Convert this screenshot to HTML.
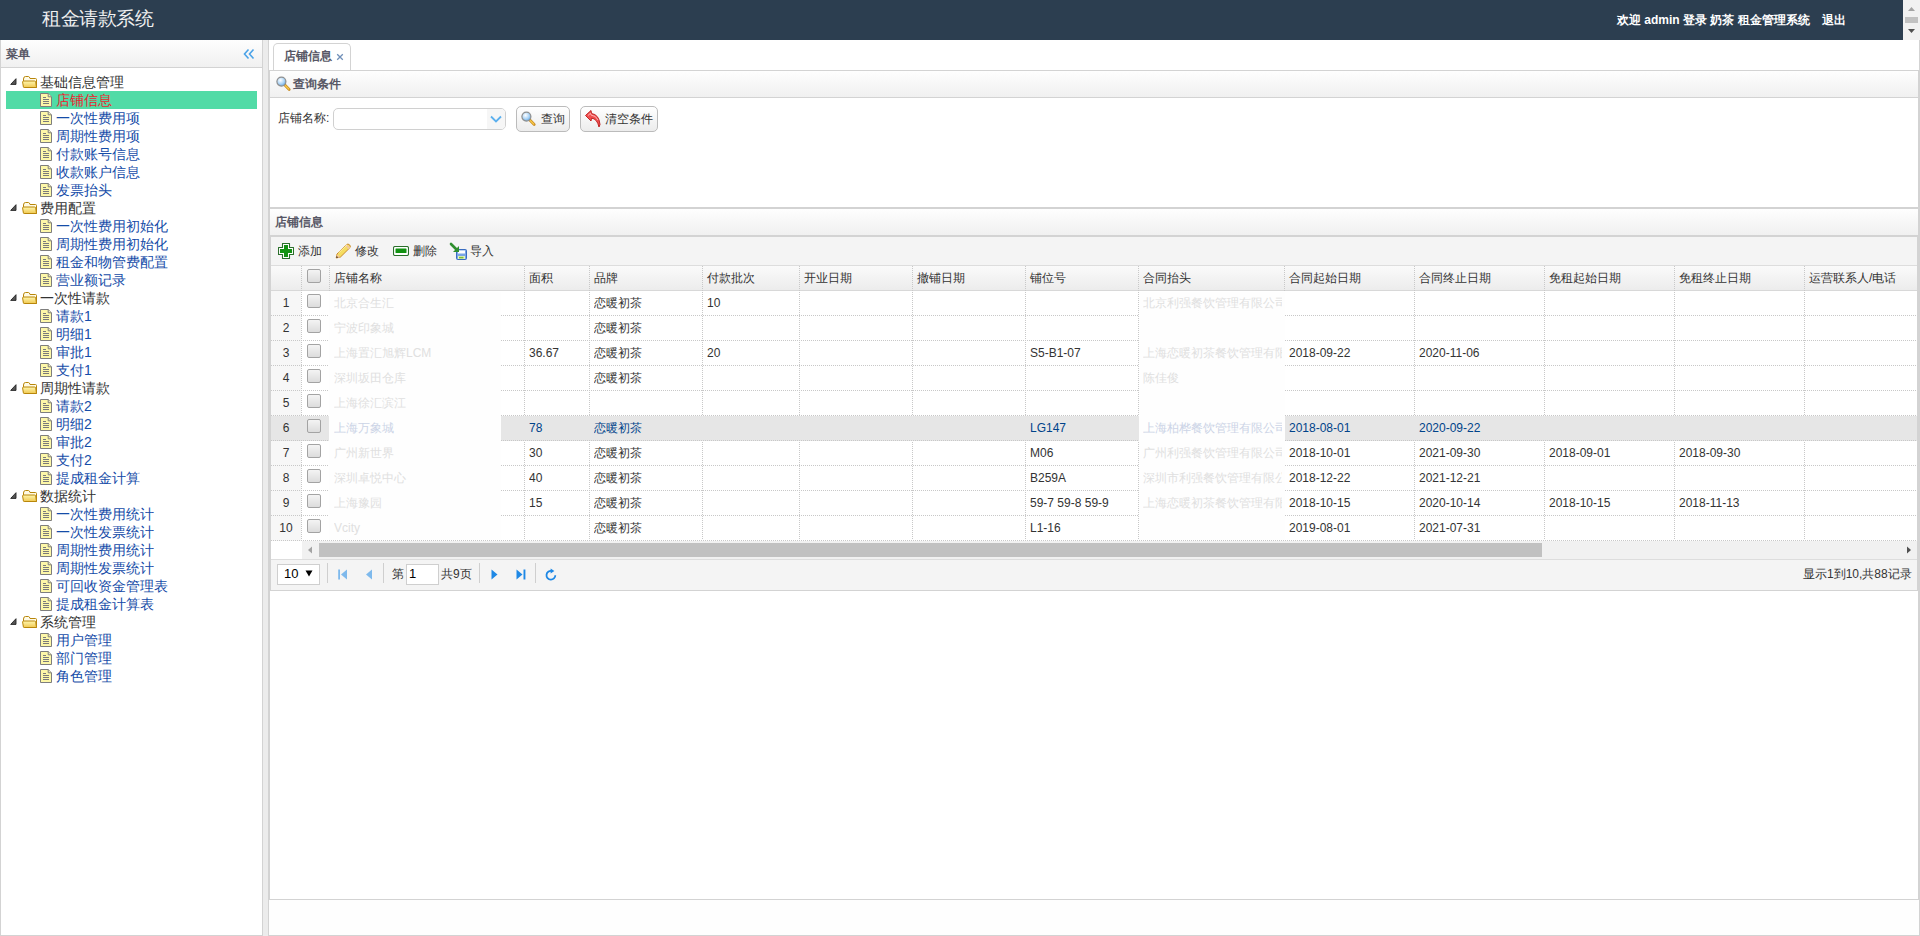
<!DOCTYPE html>
<html><head><meta charset="utf-8"><title>租金请款系统</title>
<style>
*{box-sizing:border-box}
html,body{margin:0;padding:0;width:1920px;height:936px;overflow:hidden;background:#fff;font-family:"Liberation Sans",sans-serif;font-size:12px;color:#333}
.a{position:absolute}
svg{display:block}
.nw{white-space:nowrap}
#hdr{left:0;top:0;width:1903px;height:40px;background:#2c3e50}
#hdr .title{left:42px;top:7px;letter-spacing:-0.4px;font-size:18.5px;font-weight:300;color:#f0f0f0;line-height:24px}
#hdr .info{left:1617px;top:12px;font-weight:bold;color:#fff;line-height:16px}
#vsb{left:1903px;top:0;width:17px;height:40px;background:#f1f1f1}
#west{left:0;top:40px;width:263px;height:896px;border:1px solid #d3d3d3;border-top:0}
.ph{background:linear-gradient(#fefefe,#f0f0f0)}
.ptitle{font-weight:bold;color:#575765;line-height:16px}
#split{left:263px;top:40px;width:5px;height:896px;background:#ececec}
#center{left:268px;top:40px;width:1652px;height:860px;border-left:1px solid #d3d3d3;border-right:1px solid #d3d3d3;border-bottom:1px solid #d3d3d3}
#south{left:268px;top:900px;width:1652px;height:36px;border:1px solid #d3d3d3;border-top:0;background:#fefefe}
.tn{left:6px;width:251px;height:18px;line-height:18px;font-size:14px;white-space:nowrap}
.tn.root{color:#333}
.tn.leaf{color:#154ca8}
.tn.sel{background:#51dba6;color:#ec1e2e}
.tn span{position:absolute;top:0}
.gh{height:25px;line-height:25px;color:#333;white-space:nowrap}
.cell{height:25px;line-height:25px;white-space:nowrap;overflow:hidden}
.vd{width:1px;background-image:linear-gradient(#c8c8c8 50%,transparent 50%);background-size:1px 2px}
.hd{height:1px;background-image:linear-gradient(90deg,#c8c8c8 50%,transparent 50%);background-size:2px 1px}
.ck{width:14px;height:14px;border:1px solid #a3a3a3;border-radius:2px;background:linear-gradient(#f4f4f4,#dcdcdc)}
.btn{border:1px solid #bbb;border-radius:5px;background:linear-gradient(#ffffff,#ececec);color:#333;line-height:24px;white-space:nowrap}
.sep{width:1px;height:22px;background:#ccc;border-right:1px solid #fff}
</style></head>
<body>
<div id="hdr" class="a"><div class="a title nw">租金请款系统</div><div class="a info nw">欢迎 admin 登录 奶茶 租金管理系统</div><div class="a nw" style="left:1822px;top:12px;font-weight:bold;color:#fff;line-height:16px">退出</div></div>
<div id="vsb" class="a"><svg class="a" style="left:0;top:0" width="17" height="40"><path d="M5 11 L8.5 7 L12 11 Z" fill="#a3a3a3"/><rect x="2" y="17" width="13" height="6" fill="#c1c1c1"/><path d="M5 29 L12 29 L8.5 33 Z" fill="#505050"/></svg></div>
<div id="west" class="a"><div class="a ph" style="left:0;top:0;width:261px;height:28px;border-bottom:1px solid #d3d3d3"></div><div class="a ptitle nw" style="left:5px;top:6px">菜单</div><svg class="a" style="left:241px;top:7px" width="14" height="14"><path d="M6.5 2.5 L2.5 7 L6.5 11.5 M11.5 2.5 L7.5 7 L11.5 11.5" stroke="#4ba3e8" stroke-width="1.6" fill="none"/></svg></div>
<div class="a tn root" style="top:73px"><svg class="a" style="left:4px;top:5px" width="8" height="8"><path d="M6 0.7 L6 6.4 L0.7 6.4 Z" fill="#555" stroke="#222" stroke-width="0.9" stroke-linejoin="round"/></svg><svg class="a" style="left:16px;top:3px" width="16" height="13"><defs><linearGradient id="fg" x1="0" y1="0" x2="0" y2="1"><stop offset="0" stop-color="#fff7b0"/><stop offset="1" stop-color="#f0c850"/></linearGradient></defs><path d="M1.5 3 Q1.5 0.5 3.5 0.5 H6.5 Q7.5 0.5 8 2.5 H13.5 Q14.5 2.5 14.5 3.5 V11.5 H2.5 Q1.5 11.5 1.5 10.5 Z" fill="#fffbe6" stroke="#b8860b"/><path d="M0.6 6 Q0.6 5 1.6 5 H12.5 Q13.5 5 13.7 6 L14.5 11.5 H2.5 Q1.5 11.5 1.3 10.5 Z" fill="url(#fg)" stroke="#b8860b"/></svg><span style="left:34px">基础信息管理</span></div>
<div class="a tn leaf sel" style="top:91px"><svg class="a" style="left:34px;top:2px" width="12" height="14"><path d="M0.5 0.5 L8.2 0.5 L11.5 3.8 L11.5 13.5 L0.5 13.5 Z" fill="#fdf7a8" stroke="#7e7e7e"/><path d="M8.2 0.5 L8.2 3.8 L11.5 3.8" fill="#f3eab8" stroke="#7e7e7e"/><path d="M3 4.5 H6 M3 6.5 H9 M3 8.5 H9 M3 10.5 H9" stroke="#7a7a7a" stroke-width="1"/></svg><span style="left:50px">店铺信息</span></div>
<div class="a tn leaf" style="top:109px"><svg class="a" style="left:34px;top:2px" width="12" height="14"><path d="M0.5 0.5 L8.2 0.5 L11.5 3.8 L11.5 13.5 L0.5 13.5 Z" fill="#fdf7a8" stroke="#7e7e7e"/><path d="M8.2 0.5 L8.2 3.8 L11.5 3.8" fill="#f3eab8" stroke="#7e7e7e"/><path d="M3 4.5 H6 M3 6.5 H9 M3 8.5 H9 M3 10.5 H9" stroke="#7a7a7a" stroke-width="1"/></svg><span style="left:50px">一次性费用项</span></div>
<div class="a tn leaf" style="top:127px"><svg class="a" style="left:34px;top:2px" width="12" height="14"><path d="M0.5 0.5 L8.2 0.5 L11.5 3.8 L11.5 13.5 L0.5 13.5 Z" fill="#fdf7a8" stroke="#7e7e7e"/><path d="M8.2 0.5 L8.2 3.8 L11.5 3.8" fill="#f3eab8" stroke="#7e7e7e"/><path d="M3 4.5 H6 M3 6.5 H9 M3 8.5 H9 M3 10.5 H9" stroke="#7a7a7a" stroke-width="1"/></svg><span style="left:50px">周期性费用项</span></div>
<div class="a tn leaf" style="top:145px"><svg class="a" style="left:34px;top:2px" width="12" height="14"><path d="M0.5 0.5 L8.2 0.5 L11.5 3.8 L11.5 13.5 L0.5 13.5 Z" fill="#fdf7a8" stroke="#7e7e7e"/><path d="M8.2 0.5 L8.2 3.8 L11.5 3.8" fill="#f3eab8" stroke="#7e7e7e"/><path d="M3 4.5 H6 M3 6.5 H9 M3 8.5 H9 M3 10.5 H9" stroke="#7a7a7a" stroke-width="1"/></svg><span style="left:50px">付款账号信息</span></div>
<div class="a tn leaf" style="top:163px"><svg class="a" style="left:34px;top:2px" width="12" height="14"><path d="M0.5 0.5 L8.2 0.5 L11.5 3.8 L11.5 13.5 L0.5 13.5 Z" fill="#fdf7a8" stroke="#7e7e7e"/><path d="M8.2 0.5 L8.2 3.8 L11.5 3.8" fill="#f3eab8" stroke="#7e7e7e"/><path d="M3 4.5 H6 M3 6.5 H9 M3 8.5 H9 M3 10.5 H9" stroke="#7a7a7a" stroke-width="1"/></svg><span style="left:50px">收款账户信息</span></div>
<div class="a tn leaf" style="top:181px"><svg class="a" style="left:34px;top:2px" width="12" height="14"><path d="M0.5 0.5 L8.2 0.5 L11.5 3.8 L11.5 13.5 L0.5 13.5 Z" fill="#fdf7a8" stroke="#7e7e7e"/><path d="M8.2 0.5 L8.2 3.8 L11.5 3.8" fill="#f3eab8" stroke="#7e7e7e"/><path d="M3 4.5 H6 M3 6.5 H9 M3 8.5 H9 M3 10.5 H9" stroke="#7a7a7a" stroke-width="1"/></svg><span style="left:50px">发票抬头</span></div>
<div class="a tn root" style="top:199px"><svg class="a" style="left:4px;top:5px" width="8" height="8"><path d="M6 0.7 L6 6.4 L0.7 6.4 Z" fill="#555" stroke="#222" stroke-width="0.9" stroke-linejoin="round"/></svg><svg class="a" style="left:16px;top:3px" width="16" height="13"><defs><linearGradient id="fg" x1="0" y1="0" x2="0" y2="1"><stop offset="0" stop-color="#fff7b0"/><stop offset="1" stop-color="#f0c850"/></linearGradient></defs><path d="M1.5 3 Q1.5 0.5 3.5 0.5 H6.5 Q7.5 0.5 8 2.5 H13.5 Q14.5 2.5 14.5 3.5 V11.5 H2.5 Q1.5 11.5 1.5 10.5 Z" fill="#fffbe6" stroke="#b8860b"/><path d="M0.6 6 Q0.6 5 1.6 5 H12.5 Q13.5 5 13.7 6 L14.5 11.5 H2.5 Q1.5 11.5 1.3 10.5 Z" fill="url(#fg)" stroke="#b8860b"/></svg><span style="left:34px">费用配置</span></div>
<div class="a tn leaf" style="top:217px"><svg class="a" style="left:34px;top:2px" width="12" height="14"><path d="M0.5 0.5 L8.2 0.5 L11.5 3.8 L11.5 13.5 L0.5 13.5 Z" fill="#fdf7a8" stroke="#7e7e7e"/><path d="M8.2 0.5 L8.2 3.8 L11.5 3.8" fill="#f3eab8" stroke="#7e7e7e"/><path d="M3 4.5 H6 M3 6.5 H9 M3 8.5 H9 M3 10.5 H9" stroke="#7a7a7a" stroke-width="1"/></svg><span style="left:50px">一次性费用初始化</span></div>
<div class="a tn leaf" style="top:235px"><svg class="a" style="left:34px;top:2px" width="12" height="14"><path d="M0.5 0.5 L8.2 0.5 L11.5 3.8 L11.5 13.5 L0.5 13.5 Z" fill="#fdf7a8" stroke="#7e7e7e"/><path d="M8.2 0.5 L8.2 3.8 L11.5 3.8" fill="#f3eab8" stroke="#7e7e7e"/><path d="M3 4.5 H6 M3 6.5 H9 M3 8.5 H9 M3 10.5 H9" stroke="#7a7a7a" stroke-width="1"/></svg><span style="left:50px">周期性费用初始化</span></div>
<div class="a tn leaf" style="top:253px"><svg class="a" style="left:34px;top:2px" width="12" height="14"><path d="M0.5 0.5 L8.2 0.5 L11.5 3.8 L11.5 13.5 L0.5 13.5 Z" fill="#fdf7a8" stroke="#7e7e7e"/><path d="M8.2 0.5 L8.2 3.8 L11.5 3.8" fill="#f3eab8" stroke="#7e7e7e"/><path d="M3 4.5 H6 M3 6.5 H9 M3 8.5 H9 M3 10.5 H9" stroke="#7a7a7a" stroke-width="1"/></svg><span style="left:50px">租金和物管费配置</span></div>
<div class="a tn leaf" style="top:271px"><svg class="a" style="left:34px;top:2px" width="12" height="14"><path d="M0.5 0.5 L8.2 0.5 L11.5 3.8 L11.5 13.5 L0.5 13.5 Z" fill="#fdf7a8" stroke="#7e7e7e"/><path d="M8.2 0.5 L8.2 3.8 L11.5 3.8" fill="#f3eab8" stroke="#7e7e7e"/><path d="M3 4.5 H6 M3 6.5 H9 M3 8.5 H9 M3 10.5 H9" stroke="#7a7a7a" stroke-width="1"/></svg><span style="left:50px">营业额记录</span></div>
<div class="a tn root" style="top:289px"><svg class="a" style="left:4px;top:5px" width="8" height="8"><path d="M6 0.7 L6 6.4 L0.7 6.4 Z" fill="#555" stroke="#222" stroke-width="0.9" stroke-linejoin="round"/></svg><svg class="a" style="left:16px;top:3px" width="16" height="13"><defs><linearGradient id="fg" x1="0" y1="0" x2="0" y2="1"><stop offset="0" stop-color="#fff7b0"/><stop offset="1" stop-color="#f0c850"/></linearGradient></defs><path d="M1.5 3 Q1.5 0.5 3.5 0.5 H6.5 Q7.5 0.5 8 2.5 H13.5 Q14.5 2.5 14.5 3.5 V11.5 H2.5 Q1.5 11.5 1.5 10.5 Z" fill="#fffbe6" stroke="#b8860b"/><path d="M0.6 6 Q0.6 5 1.6 5 H12.5 Q13.5 5 13.7 6 L14.5 11.5 H2.5 Q1.5 11.5 1.3 10.5 Z" fill="url(#fg)" stroke="#b8860b"/></svg><span style="left:34px">一次性请款</span></div>
<div class="a tn leaf" style="top:307px"><svg class="a" style="left:34px;top:2px" width="12" height="14"><path d="M0.5 0.5 L8.2 0.5 L11.5 3.8 L11.5 13.5 L0.5 13.5 Z" fill="#fdf7a8" stroke="#7e7e7e"/><path d="M8.2 0.5 L8.2 3.8 L11.5 3.8" fill="#f3eab8" stroke="#7e7e7e"/><path d="M3 4.5 H6 M3 6.5 H9 M3 8.5 H9 M3 10.5 H9" stroke="#7a7a7a" stroke-width="1"/></svg><span style="left:50px">请款1</span></div>
<div class="a tn leaf" style="top:325px"><svg class="a" style="left:34px;top:2px" width="12" height="14"><path d="M0.5 0.5 L8.2 0.5 L11.5 3.8 L11.5 13.5 L0.5 13.5 Z" fill="#fdf7a8" stroke="#7e7e7e"/><path d="M8.2 0.5 L8.2 3.8 L11.5 3.8" fill="#f3eab8" stroke="#7e7e7e"/><path d="M3 4.5 H6 M3 6.5 H9 M3 8.5 H9 M3 10.5 H9" stroke="#7a7a7a" stroke-width="1"/></svg><span style="left:50px">明细1</span></div>
<div class="a tn leaf" style="top:343px"><svg class="a" style="left:34px;top:2px" width="12" height="14"><path d="M0.5 0.5 L8.2 0.5 L11.5 3.8 L11.5 13.5 L0.5 13.5 Z" fill="#fdf7a8" stroke="#7e7e7e"/><path d="M8.2 0.5 L8.2 3.8 L11.5 3.8" fill="#f3eab8" stroke="#7e7e7e"/><path d="M3 4.5 H6 M3 6.5 H9 M3 8.5 H9 M3 10.5 H9" stroke="#7a7a7a" stroke-width="1"/></svg><span style="left:50px">审批1</span></div>
<div class="a tn leaf" style="top:361px"><svg class="a" style="left:34px;top:2px" width="12" height="14"><path d="M0.5 0.5 L8.2 0.5 L11.5 3.8 L11.5 13.5 L0.5 13.5 Z" fill="#fdf7a8" stroke="#7e7e7e"/><path d="M8.2 0.5 L8.2 3.8 L11.5 3.8" fill="#f3eab8" stroke="#7e7e7e"/><path d="M3 4.5 H6 M3 6.5 H9 M3 8.5 H9 M3 10.5 H9" stroke="#7a7a7a" stroke-width="1"/></svg><span style="left:50px">支付1</span></div>
<div class="a tn root" style="top:379px"><svg class="a" style="left:4px;top:5px" width="8" height="8"><path d="M6 0.7 L6 6.4 L0.7 6.4 Z" fill="#555" stroke="#222" stroke-width="0.9" stroke-linejoin="round"/></svg><svg class="a" style="left:16px;top:3px" width="16" height="13"><defs><linearGradient id="fg" x1="0" y1="0" x2="0" y2="1"><stop offset="0" stop-color="#fff7b0"/><stop offset="1" stop-color="#f0c850"/></linearGradient></defs><path d="M1.5 3 Q1.5 0.5 3.5 0.5 H6.5 Q7.5 0.5 8 2.5 H13.5 Q14.5 2.5 14.5 3.5 V11.5 H2.5 Q1.5 11.5 1.5 10.5 Z" fill="#fffbe6" stroke="#b8860b"/><path d="M0.6 6 Q0.6 5 1.6 5 H12.5 Q13.5 5 13.7 6 L14.5 11.5 H2.5 Q1.5 11.5 1.3 10.5 Z" fill="url(#fg)" stroke="#b8860b"/></svg><span style="left:34px">周期性请款</span></div>
<div class="a tn leaf" style="top:397px"><svg class="a" style="left:34px;top:2px" width="12" height="14"><path d="M0.5 0.5 L8.2 0.5 L11.5 3.8 L11.5 13.5 L0.5 13.5 Z" fill="#fdf7a8" stroke="#7e7e7e"/><path d="M8.2 0.5 L8.2 3.8 L11.5 3.8" fill="#f3eab8" stroke="#7e7e7e"/><path d="M3 4.5 H6 M3 6.5 H9 M3 8.5 H9 M3 10.5 H9" stroke="#7a7a7a" stroke-width="1"/></svg><span style="left:50px">请款2</span></div>
<div class="a tn leaf" style="top:415px"><svg class="a" style="left:34px;top:2px" width="12" height="14"><path d="M0.5 0.5 L8.2 0.5 L11.5 3.8 L11.5 13.5 L0.5 13.5 Z" fill="#fdf7a8" stroke="#7e7e7e"/><path d="M8.2 0.5 L8.2 3.8 L11.5 3.8" fill="#f3eab8" stroke="#7e7e7e"/><path d="M3 4.5 H6 M3 6.5 H9 M3 8.5 H9 M3 10.5 H9" stroke="#7a7a7a" stroke-width="1"/></svg><span style="left:50px">明细2</span></div>
<div class="a tn leaf" style="top:433px"><svg class="a" style="left:34px;top:2px" width="12" height="14"><path d="M0.5 0.5 L8.2 0.5 L11.5 3.8 L11.5 13.5 L0.5 13.5 Z" fill="#fdf7a8" stroke="#7e7e7e"/><path d="M8.2 0.5 L8.2 3.8 L11.5 3.8" fill="#f3eab8" stroke="#7e7e7e"/><path d="M3 4.5 H6 M3 6.5 H9 M3 8.5 H9 M3 10.5 H9" stroke="#7a7a7a" stroke-width="1"/></svg><span style="left:50px">审批2</span></div>
<div class="a tn leaf" style="top:451px"><svg class="a" style="left:34px;top:2px" width="12" height="14"><path d="M0.5 0.5 L8.2 0.5 L11.5 3.8 L11.5 13.5 L0.5 13.5 Z" fill="#fdf7a8" stroke="#7e7e7e"/><path d="M8.2 0.5 L8.2 3.8 L11.5 3.8" fill="#f3eab8" stroke="#7e7e7e"/><path d="M3 4.5 H6 M3 6.5 H9 M3 8.5 H9 M3 10.5 H9" stroke="#7a7a7a" stroke-width="1"/></svg><span style="left:50px">支付2</span></div>
<div class="a tn leaf" style="top:469px"><svg class="a" style="left:34px;top:2px" width="12" height="14"><path d="M0.5 0.5 L8.2 0.5 L11.5 3.8 L11.5 13.5 L0.5 13.5 Z" fill="#fdf7a8" stroke="#7e7e7e"/><path d="M8.2 0.5 L8.2 3.8 L11.5 3.8" fill="#f3eab8" stroke="#7e7e7e"/><path d="M3 4.5 H6 M3 6.5 H9 M3 8.5 H9 M3 10.5 H9" stroke="#7a7a7a" stroke-width="1"/></svg><span style="left:50px">提成租金计算</span></div>
<div class="a tn root" style="top:487px"><svg class="a" style="left:4px;top:5px" width="8" height="8"><path d="M6 0.7 L6 6.4 L0.7 6.4 Z" fill="#555" stroke="#222" stroke-width="0.9" stroke-linejoin="round"/></svg><svg class="a" style="left:16px;top:3px" width="16" height="13"><defs><linearGradient id="fg" x1="0" y1="0" x2="0" y2="1"><stop offset="0" stop-color="#fff7b0"/><stop offset="1" stop-color="#f0c850"/></linearGradient></defs><path d="M1.5 3 Q1.5 0.5 3.5 0.5 H6.5 Q7.5 0.5 8 2.5 H13.5 Q14.5 2.5 14.5 3.5 V11.5 H2.5 Q1.5 11.5 1.5 10.5 Z" fill="#fffbe6" stroke="#b8860b"/><path d="M0.6 6 Q0.6 5 1.6 5 H12.5 Q13.5 5 13.7 6 L14.5 11.5 H2.5 Q1.5 11.5 1.3 10.5 Z" fill="url(#fg)" stroke="#b8860b"/></svg><span style="left:34px">数据统计</span></div>
<div class="a tn leaf" style="top:505px"><svg class="a" style="left:34px;top:2px" width="12" height="14"><path d="M0.5 0.5 L8.2 0.5 L11.5 3.8 L11.5 13.5 L0.5 13.5 Z" fill="#fdf7a8" stroke="#7e7e7e"/><path d="M8.2 0.5 L8.2 3.8 L11.5 3.8" fill="#f3eab8" stroke="#7e7e7e"/><path d="M3 4.5 H6 M3 6.5 H9 M3 8.5 H9 M3 10.5 H9" stroke="#7a7a7a" stroke-width="1"/></svg><span style="left:50px">一次性费用统计</span></div>
<div class="a tn leaf" style="top:523px"><svg class="a" style="left:34px;top:2px" width="12" height="14"><path d="M0.5 0.5 L8.2 0.5 L11.5 3.8 L11.5 13.5 L0.5 13.5 Z" fill="#fdf7a8" stroke="#7e7e7e"/><path d="M8.2 0.5 L8.2 3.8 L11.5 3.8" fill="#f3eab8" stroke="#7e7e7e"/><path d="M3 4.5 H6 M3 6.5 H9 M3 8.5 H9 M3 10.5 H9" stroke="#7a7a7a" stroke-width="1"/></svg><span style="left:50px">一次性发票统计</span></div>
<div class="a tn leaf" style="top:541px"><svg class="a" style="left:34px;top:2px" width="12" height="14"><path d="M0.5 0.5 L8.2 0.5 L11.5 3.8 L11.5 13.5 L0.5 13.5 Z" fill="#fdf7a8" stroke="#7e7e7e"/><path d="M8.2 0.5 L8.2 3.8 L11.5 3.8" fill="#f3eab8" stroke="#7e7e7e"/><path d="M3 4.5 H6 M3 6.5 H9 M3 8.5 H9 M3 10.5 H9" stroke="#7a7a7a" stroke-width="1"/></svg><span style="left:50px">周期性费用统计</span></div>
<div class="a tn leaf" style="top:559px"><svg class="a" style="left:34px;top:2px" width="12" height="14"><path d="M0.5 0.5 L8.2 0.5 L11.5 3.8 L11.5 13.5 L0.5 13.5 Z" fill="#fdf7a8" stroke="#7e7e7e"/><path d="M8.2 0.5 L8.2 3.8 L11.5 3.8" fill="#f3eab8" stroke="#7e7e7e"/><path d="M3 4.5 H6 M3 6.5 H9 M3 8.5 H9 M3 10.5 H9" stroke="#7a7a7a" stroke-width="1"/></svg><span style="left:50px">周期性发票统计</span></div>
<div class="a tn leaf" style="top:577px"><svg class="a" style="left:34px;top:2px" width="12" height="14"><path d="M0.5 0.5 L8.2 0.5 L11.5 3.8 L11.5 13.5 L0.5 13.5 Z" fill="#fdf7a8" stroke="#7e7e7e"/><path d="M8.2 0.5 L8.2 3.8 L11.5 3.8" fill="#f3eab8" stroke="#7e7e7e"/><path d="M3 4.5 H6 M3 6.5 H9 M3 8.5 H9 M3 10.5 H9" stroke="#7a7a7a" stroke-width="1"/></svg><span style="left:50px">可回收资金管理表</span></div>
<div class="a tn leaf" style="top:595px"><svg class="a" style="left:34px;top:2px" width="12" height="14"><path d="M0.5 0.5 L8.2 0.5 L11.5 3.8 L11.5 13.5 L0.5 13.5 Z" fill="#fdf7a8" stroke="#7e7e7e"/><path d="M8.2 0.5 L8.2 3.8 L11.5 3.8" fill="#f3eab8" stroke="#7e7e7e"/><path d="M3 4.5 H6 M3 6.5 H9 M3 8.5 H9 M3 10.5 H9" stroke="#7a7a7a" stroke-width="1"/></svg><span style="left:50px">提成租金计算表</span></div>
<div class="a tn root" style="top:613px"><svg class="a" style="left:4px;top:5px" width="8" height="8"><path d="M6 0.7 L6 6.4 L0.7 6.4 Z" fill="#555" stroke="#222" stroke-width="0.9" stroke-linejoin="round"/></svg><svg class="a" style="left:16px;top:3px" width="16" height="13"><defs><linearGradient id="fg" x1="0" y1="0" x2="0" y2="1"><stop offset="0" stop-color="#fff7b0"/><stop offset="1" stop-color="#f0c850"/></linearGradient></defs><path d="M1.5 3 Q1.5 0.5 3.5 0.5 H6.5 Q7.5 0.5 8 2.5 H13.5 Q14.5 2.5 14.5 3.5 V11.5 H2.5 Q1.5 11.5 1.5 10.5 Z" fill="#fffbe6" stroke="#b8860b"/><path d="M0.6 6 Q0.6 5 1.6 5 H12.5 Q13.5 5 13.7 6 L14.5 11.5 H2.5 Q1.5 11.5 1.3 10.5 Z" fill="url(#fg)" stroke="#b8860b"/></svg><span style="left:34px">系统管理</span></div>
<div class="a tn leaf" style="top:631px"><svg class="a" style="left:34px;top:2px" width="12" height="14"><path d="M0.5 0.5 L8.2 0.5 L11.5 3.8 L11.5 13.5 L0.5 13.5 Z" fill="#fdf7a8" stroke="#7e7e7e"/><path d="M8.2 0.5 L8.2 3.8 L11.5 3.8" fill="#f3eab8" stroke="#7e7e7e"/><path d="M3 4.5 H6 M3 6.5 H9 M3 8.5 H9 M3 10.5 H9" stroke="#7a7a7a" stroke-width="1"/></svg><span style="left:50px">用户管理</span></div>
<div class="a tn leaf" style="top:649px"><svg class="a" style="left:34px;top:2px" width="12" height="14"><path d="M0.5 0.5 L8.2 0.5 L11.5 3.8 L11.5 13.5 L0.5 13.5 Z" fill="#fdf7a8" stroke="#7e7e7e"/><path d="M8.2 0.5 L8.2 3.8 L11.5 3.8" fill="#f3eab8" stroke="#7e7e7e"/><path d="M3 4.5 H6 M3 6.5 H9 M3 8.5 H9 M3 10.5 H9" stroke="#7a7a7a" stroke-width="1"/></svg><span style="left:50px">部门管理</span></div>
<div class="a tn leaf" style="top:667px"><svg class="a" style="left:34px;top:2px" width="12" height="14"><path d="M0.5 0.5 L8.2 0.5 L11.5 3.8 L11.5 13.5 L0.5 13.5 Z" fill="#fdf7a8" stroke="#7e7e7e"/><path d="M8.2 0.5 L8.2 3.8 L11.5 3.8" fill="#f3eab8" stroke="#7e7e7e"/><path d="M3 4.5 H6 M3 6.5 H9 M3 8.5 H9 M3 10.5 H9" stroke="#7a7a7a" stroke-width="1"/></svg><span style="left:50px">角色管理</span></div>
<div id="split" class="a"></div>
<div id="center" class="a"></div>
<div id="south" class="a"></div>
<div class="a" style="left:269px;top:71px;width:1650px;height:829px;border:1px solid #d3d3d3;border-top:0"></div><div class="a" style="left:269px;top:71px;width:1650px;height:829px;border:1px solid #d3d3d3;border-top:0"></div><div class="a" style="left:273px;top:43px;width:78px;height:27px;border:1px solid #d3d3d3;border-bottom:0;border-radius:5px 5px 0 0;background:#fff"></div><div class="a" style="left:268px;top:70px;width:1652px;height:1px;background:#d3d3d3"></div><div class="a ptitle nw" style="left:284px;top:48px;color:#575765">店铺信息</div><svg class="a" style="left:336px;top:53px" width="8" height="8"><path d="M1.2 1.2 L6.8 6.8 M6.8 1.2 L1.2 6.8" stroke="#6f8fb8" stroke-width="1.3"/></svg><div class="a ph" style="left:269px;top:71px;width:1650px;height:27px;border:1px solid #d3d3d3;border-top:0"></div><div class="a" style="left:269px;top:98px;width:1650px;height:110px;border:1px solid #d3d3d3;border-top:0"></div><svg class="a" style="left:276px;top:76px" width="16" height="16"><defs><radialGradient id="lens1" cx="0.4" cy="0.35" r="0.7"><stop offset="0" stop-color="#ffffff"/><stop offset="0.6" stop-color="#a9d3f7"/><stop offset="1" stop-color="#5d9fd9"/></radialGradient></defs><path d="M8.6 8.8 L13.2 13.4" stroke="#c88a20" stroke-width="2.8" stroke-linecap="round"/><path d="M9 9.2 L12.8 13" stroke="#f7c948" stroke-width="1.3" stroke-linecap="round"/><circle cx="5.4" cy="5.6" r="4.5" fill="url(#lens1)" stroke="#8f8f8f" stroke-width="1.2"/></svg><div class="a ptitle nw" style="left:293px;top:76px;color:#575765">查询条件</div><div class="a nw" style="left:278px;top:109px;line-height:18px;color:#333">店铺名称:</div><div class="a" style="left:333px;top:108px;width:173px;height:22px;border:1px solid #d0d0d0;border-radius:5px;background:#fff;overflow:hidden"><div class="a" style="left:153px;top:0;width:18px;height:20px;background:#f6f6f6"></div><svg class="a" style="left:156px;top:6px" width="12" height="8"><path d="M1 1.5 L6 6.5 L11 1.5" stroke="#5cb0ee" stroke-width="1.8" fill="none"/></svg></div><div class="a btn" style="left:516px;top:106px;width:54px;height:26px"></div><svg class="a" style="left:521px;top:111px" width="16" height="16"><defs><radialGradient id="lens2" cx="0.4" cy="0.35" r="0.7"><stop offset="0" stop-color="#ffffff"/><stop offset="0.6" stop-color="#a9d3f7"/><stop offset="1" stop-color="#5d9fd9"/></radialGradient></defs><path d="M8.6 8.8 L13.2 13.4" stroke="#c88a20" stroke-width="2.8" stroke-linecap="round"/><path d="M9 9.2 L12.8 13" stroke="#f7c948" stroke-width="1.3" stroke-linecap="round"/><circle cx="5.4" cy="5.6" r="4.5" fill="url(#lens2)" stroke="#8f8f8f" stroke-width="1.2"/></svg><div class="a nw" style="left:541px;top:110px;line-height:18px;color:#333">查询</div><div class="a btn" style="left:580px;top:106px;width:78px;height:26px"></div><svg class="a" style="left:584px;top:109px" width="18" height="19"><path d="M1.5 6.5 L7 1.5 L7.5 4.5 Q15 5.5 16 15.5 L15 18 Q13 9.5 7.5 9.2 L7 12 Z" fill="#f05050" stroke="#c02424" stroke-width="1"/><path d="M4 6.5 L6.5 4.2 L7 6 Q12 6.5 14 11" stroke="#ffb0b0" stroke-width="1" fill="none"/></svg><div class="a nw" style="left:605px;top:110px;line-height:18px;color:#333">清空条件</div><div class="a ph" style="left:269px;top:208px;width:1650px;height:28px;border:1px solid #d3d3d3"></div><div class="a ptitle nw" style="left:275px;top:214px;color:#575765">店铺信息</div><div class="a" style="left:269px;top:236px;width:1650px;height:355px;border:1px solid #d3d3d3;border-top:0"></div><div class="a" style="left:270px;top:236px;width:1648px;height:354px;border:1px solid #d3d3d3"></div><div class="a" style="left:271px;top:237px;width:1646px;height:29px;background:#f4f4f4;border-bottom:1px solid #dddddd"></div><svg class="a" style="left:278px;top:243px" width="16" height="16"><path d="M4.5 0.5 H11.5 V4.5 H15.5 V11.5 H11.5 V15.5 H4.5 V11.5 H0.5 V4.5 H4.5 Z" fill="#ffffff" stroke="#2b6f2b" stroke-width="1.1" stroke-linejoin="round"/><path d="M6 2 H10 V6 H14 V10 H10 V14 H6 V10 H2 V6 H6 Z" fill="#129212"/></svg><div class="a nw" style="left:298px;top:242px;line-height:18px;color:#333">添加</div><svg class="a" style="left:335px;top:243px" width="17" height="16"><path d="M1.2 15 L2 11 L11.5 1.5 Q13 0.5 14.5 1.8 Q16 3.3 15 4.6 L5.5 14 Z" fill="#f5dc60" stroke="#c98a2a" stroke-width="1"/><path d="M11 2 L14.5 5.5" stroke="#f0c8a0" stroke-width="2.2"/><path d="M3.5 10 L12 1.8" stroke="#fff3b0" stroke-width="1"/><path d="M1.2 15 L2 11.2 L5.2 14.2 Z" fill="#f3c9a0"/><path d="M1.2 15 L1.7 13 L3.2 14.5 Z" fill="#3a2810"/></svg><div class="a nw" style="left:355px;top:242px;line-height:18px;color:#333">修改</div><svg class="a" style="left:393px;top:246px" width="16" height="10"><rect x="0.5" y="0.5" width="15" height="9" rx="1.5" fill="#ffffff" stroke="#2b6f2b" stroke-width="1.1"/><rect x="2.5" y="2.5" width="11" height="4.5" rx="0.5" fill="#129212"/></svg><div class="a nw" style="left:413px;top:242px;line-height:18px;color:#333">删除</div><svg class="a" style="left:449px;top:242px" width="18" height="18"><rect x="7.5" y="7.5" width="10" height="10" rx="1" fill="#7aa6e6" stroke="#3a6cc0"/><rect x="9" y="8.5" width="7" height="3" fill="#ffffff"/><rect x="9" y="14" width="7" height="3" fill="#e8f5c0"/><rect x="10" y="14.8" width="4.5" height="1.6" fill="#7cc040"/><path d="M2 2 L7.5 7.5" stroke="#2f8f2f" stroke-width="2.6" stroke-linecap="round"/><path d="M4 10 L10 10 L10 4 Z" fill="#2f8f2f"/></svg><div class="a nw" style="left:470px;top:242px;line-height:18px;color:#333">导入</div><div class="a" style="left:271px;top:266px;width:1646px;height:25px;background:linear-gradient(#fafafa,#ececec);border-bottom:1px solid #d8d8d8"></div><div class="a" style="left:271px;top:291px;width:30px;height:250px;background:#f7f7f7"></div><div class="a vd" style="left:301px;top:266px;height:274px"></div><div class="a vd" style="left:329px;top:266px;height:274px"></div><div class="a gh" style="left:334px;top:266px">店铺名称</div><div class="a vd" style="left:524px;top:266px;height:274px"></div><div class="a gh" style="left:529px;top:266px">面积</div><div class="a vd" style="left:589px;top:266px;height:274px"></div><div class="a gh" style="left:594px;top:266px">品牌</div><div class="a vd" style="left:702px;top:266px;height:274px"></div><div class="a gh" style="left:707px;top:266px">付款批次</div><div class="a vd" style="left:799px;top:266px;height:274px"></div><div class="a gh" style="left:804px;top:266px">开业日期</div><div class="a vd" style="left:912px;top:266px;height:274px"></div><div class="a gh" style="left:917px;top:266px">撤铺日期</div><div class="a vd" style="left:1025px;top:266px;height:274px"></div><div class="a gh" style="left:1030px;top:266px">铺位号</div><div class="a vd" style="left:1138px;top:266px;height:274px"></div><div class="a gh" style="left:1143px;top:266px">合同抬头</div><div class="a vd" style="left:1284px;top:266px;height:274px"></div><div class="a gh" style="left:1289px;top:266px">合同起始日期</div><div class="a vd" style="left:1414px;top:266px;height:274px"></div><div class="a gh" style="left:1419px;top:266px">合同终止日期</div><div class="a vd" style="left:1544px;top:266px;height:274px"></div><div class="a gh" style="left:1549px;top:266px">免租起始日期</div><div class="a vd" style="left:1674px;top:266px;height:274px"></div><div class="a gh" style="left:1679px;top:266px">免租终止日期</div><div class="a vd" style="left:1804px;top:266px;height:274px"></div><div class="a gh" style="left:1809px;top:266px">运营联系人/电话</div><div class="a ck" style="left:307px;top:269px"></div><div class="a hd" style="left:271px;top:315px;width:1646px"></div><div class="a cell" style="left:271px;top:291px;width:30px;text-align:center;color:#333">1</div><div class="a ck" style="left:307px;top:294px"></div><div class="a cell" style="left:594px;top:291px;width:106px;color:#333">恋暖初茶</div><div class="a cell" style="left:707px;top:291px;width:90px;color:#333">10</div><div class="a hd" style="left:271px;top:340px;width:1646px"></div><div class="a cell" style="left:271px;top:316px;width:30px;text-align:center;color:#333">2</div><div class="a ck" style="left:307px;top:319px"></div><div class="a cell" style="left:594px;top:316px;width:106px;color:#333">恋暖初茶</div><div class="a hd" style="left:271px;top:365px;width:1646px"></div><div class="a cell" style="left:271px;top:341px;width:30px;text-align:center;color:#333">3</div><div class="a ck" style="left:307px;top:344px"></div><div class="a cell" style="left:529px;top:341px;width:58px;color:#333">36.67</div><div class="a cell" style="left:594px;top:341px;width:106px;color:#333">恋暖初茶</div><div class="a cell" style="left:707px;top:341px;width:90px;color:#333">20</div><div class="a cell" style="left:1030px;top:341px;width:106px;color:#333">S5-B1-07</div><div class="a cell" style="left:1289px;top:341px;width:123px;color:#333">2018-09-22</div><div class="a cell" style="left:1419px;top:341px;width:123px;color:#333">2020-11-06</div><div class="a hd" style="left:271px;top:390px;width:1646px"></div><div class="a cell" style="left:271px;top:366px;width:30px;text-align:center;color:#333">4</div><div class="a ck" style="left:307px;top:369px"></div><div class="a cell" style="left:594px;top:366px;width:106px;color:#333">恋暖初茶</div><div class="a hd" style="left:271px;top:415px;width:1646px"></div><div class="a cell" style="left:271px;top:391px;width:30px;text-align:center;color:#333">5</div><div class="a ck" style="left:307px;top:394px"></div><div class="a" style="left:271px;top:416px;width:1646px;height:25px;background:#e6e6e6"></div><div class="a hd" style="left:271px;top:440px;width:1646px"></div><div class="a cell" style="left:271px;top:416px;width:30px;text-align:center;color:#333">6</div><div class="a ck" style="left:307px;top:419px"></div><div class="a cell" style="left:529px;top:416px;width:58px;color:#00438a">78</div><div class="a cell" style="left:594px;top:416px;width:106px;color:#00438a">恋暖初茶</div><div class="a cell" style="left:1030px;top:416px;width:106px;color:#00438a">LG147</div><div class="a cell" style="left:1289px;top:416px;width:123px;color:#00438a">2018-08-01</div><div class="a cell" style="left:1419px;top:416px;width:123px;color:#00438a">2020-09-22</div><div class="a hd" style="left:271px;top:465px;width:1646px"></div><div class="a cell" style="left:271px;top:441px;width:30px;text-align:center;color:#333">7</div><div class="a ck" style="left:307px;top:444px"></div><div class="a cell" style="left:529px;top:441px;width:58px;color:#333">30</div><div class="a cell" style="left:594px;top:441px;width:106px;color:#333">恋暖初茶</div><div class="a cell" style="left:1030px;top:441px;width:106px;color:#333">M06</div><div class="a cell" style="left:1289px;top:441px;width:123px;color:#333">2018-10-01</div><div class="a cell" style="left:1419px;top:441px;width:123px;color:#333">2021-09-30</div><div class="a cell" style="left:1549px;top:441px;width:123px;color:#333">2018-09-01</div><div class="a cell" style="left:1679px;top:441px;width:123px;color:#333">2018-09-30</div><div class="a hd" style="left:271px;top:490px;width:1646px"></div><div class="a cell" style="left:271px;top:466px;width:30px;text-align:center;color:#333">8</div><div class="a ck" style="left:307px;top:469px"></div><div class="a cell" style="left:529px;top:466px;width:58px;color:#333">40</div><div class="a cell" style="left:594px;top:466px;width:106px;color:#333">恋暖初茶</div><div class="a cell" style="left:1030px;top:466px;width:106px;color:#333">B259A</div><div class="a cell" style="left:1289px;top:466px;width:123px;color:#333">2018-12-22</div><div class="a cell" style="left:1419px;top:466px;width:123px;color:#333">2021-12-21</div><div class="a hd" style="left:271px;top:515px;width:1646px"></div><div class="a cell" style="left:271px;top:491px;width:30px;text-align:center;color:#333">9</div><div class="a ck" style="left:307px;top:494px"></div><div class="a cell" style="left:529px;top:491px;width:58px;color:#333">15</div><div class="a cell" style="left:594px;top:491px;width:106px;color:#333">恋暖初茶</div><div class="a cell" style="left:1030px;top:491px;width:106px;color:#333">59-7 59-8 59-9</div><div class="a cell" style="left:1289px;top:491px;width:123px;color:#333">2018-10-15</div><div class="a cell" style="left:1419px;top:491px;width:123px;color:#333">2020-10-14</div><div class="a cell" style="left:1549px;top:491px;width:123px;color:#333">2018-10-15</div><div class="a cell" style="left:1679px;top:491px;width:123px;color:#333">2018-11-13</div><div class="a hd" style="left:271px;top:540px;width:1646px"></div><div class="a cell" style="left:271px;top:516px;width:30px;text-align:center;color:#333">10</div><div class="a ck" style="left:307px;top:519px"></div><div class="a cell" style="left:594px;top:516px;width:106px;color:#333">恋暖初茶</div><div class="a cell" style="left:1030px;top:516px;width:106px;color:#333">L1-16</div><div class="a cell" style="left:1289px;top:516px;width:123px;color:#333">2019-08-01</div><div class="a cell" style="left:1419px;top:516px;width:123px;color:#333">2021-07-31</div><div class="a" style="left:329px;top:292px;width:172px;height:248px;background:#fefefe"></div><div class="a" style="left:1139px;top:292px;width:146px;height:248px;background:#fefefe"></div><div class="a cell" style="left:334px;top:291px;width:188px;color:#e0e0e0">北京合生汇</div><div class="a cell" style="left:1143px;top:291px;width:139px;color:#e0e0e0">北京利强餐饮管理有限公司</div><div class="a cell" style="left:334px;top:316px;width:188px;color:#e0e0e0">宁波印象城</div><div class="a cell" style="left:334px;top:341px;width:188px;color:#e0e0e0">上海置汇旭辉LCM</div><div class="a cell" style="left:1143px;top:341px;width:139px;color:#e0e0e0">上海恋暖初茶餐饮管理有限公司</div><div class="a cell" style="left:334px;top:366px;width:188px;color:#e0e0e0">深圳坂田仓库</div><div class="a cell" style="left:1143px;top:366px;width:139px;color:#e0e0e0">陈佳俊</div><div class="a cell" style="left:334px;top:391px;width:188px;color:#e0e0e0">上海徐汇滨江</div><div class="a cell" style="left:334px;top:416px;width:188px;color:#ccd4e6">上海万象城</div><div class="a cell" style="left:1143px;top:416px;width:139px;color:#ccd4e6">上海柏桦餐饮管理有限公司</div><div class="a cell" style="left:334px;top:441px;width:188px;color:#e0e0e0">广州新世界</div><div class="a cell" style="left:1143px;top:441px;width:139px;color:#e0e0e0">广州利强餐饮管理有限公司</div><div class="a cell" style="left:334px;top:466px;width:188px;color:#e0e0e0">深圳卓悦中心</div><div class="a cell" style="left:1143px;top:466px;width:139px;color:#e0e0e0">深圳市利强餐饮管理有限公司</div><div class="a cell" style="left:334px;top:491px;width:188px;color:#e0e0e0">上海豫园</div><div class="a cell" style="left:1143px;top:491px;width:139px;color:#e0e0e0">上海恋暖初茶餐饮管理有限公司</div><div class="a cell" style="left:334px;top:516px;width:188px;color:#e0e0e0">Vcity</div><div class="a" style="left:271px;top:541px;width:1646px;height:18px;background:#fff"></div><div class="a" style="left:302px;top:541px;width:1615px;height:18px;background:#f1f1f1"></div><svg class="a" style="left:305px;top:545px" width="10" height="10"><path d="M7 1.5 L3 5 L7 8.5 Z" fill="#a3a3a3"/></svg><div class="a" style="left:319px;top:543px;width:1223px;height:14px;background:#c1c1c1"></div><svg class="a" style="left:1904px;top:545px" width="10" height="10"><path d="M3 1.5 L7 5 L3 8.5 Z" fill="#505050"/></svg><div class="a" style="left:271px;top:559px;width:1646px;height:31px;background:#f4f4f4;border-top:1px solid #dddddd"></div><div class="a" style="left:277px;top:564px;width:43px;height:21px;background:#fff;border:1px solid #cfcfcf"></div><div class="a nw" style="left:284px;top:566px;line-height:16px;font-size:13px;color:#000">10</div><svg class="a" style="left:305px;top:570px" width="8" height="7"><path d="M0.5 0.5 L7.5 0.5 L4 6.5 Z" fill="#000"/></svg><div class="a" style="left:327px;top:563px;width:1px;height:20px;background:#cfcfcf"></div><div class="a" style="left:383px;top:563px;width:1px;height:20px;background:#cfcfcf"></div><div class="a" style="left:479px;top:563px;width:1px;height:20px;background:#cfcfcf"></div><div class="a" style="left:535px;top:563px;width:1px;height:20px;background:#cfcfcf"></div><svg class="a" style="left:337px;top:568px" width="12" height="13"><rect x="1.2" y="1.5" width="1.8" height="10" fill="#1e88e5" opacity="0.55"/><path d="M10 1.5 L4 6.5 L10 11.5 Z" fill="#1e88e5" opacity="0.55"/></svg><svg class="a" style="left:364px;top:568px" width="12" height="13"><path d="M8 1.5 L2 6.5 L8 11.5 Z" fill="#1e88e5" opacity="0.55"/></svg><div class="a nw" style="left:392px;top:566px;line-height:16px;color:#333">第</div><div class="a" style="left:406px;top:564px;width:33px;height:21px;background:#fff;border:1px solid #cfcfcf"></div><div class="a nw" style="left:409px;top:566px;line-height:16px;font-size:13px;color:#000">1</div><div class="a nw" style="left:441px;top:566px;line-height:16px;color:#333">共9页</div><svg class="a" style="left:489px;top:568px" width="12" height="13"><path d="M2.5 1.5 L8.5 6.5 L2.5 11.5 Z" fill="#1e88e5"/></svg><svg class="a" style="left:515px;top:568px" width="12" height="13"><path d="M1.5 1.5 L7.5 6.5 L1.5 11.5 Z" fill="#1e88e5"/><rect x="8.5" y="1.5" width="1.9" height="10" fill="#1e88e5"/></svg><svg class="a" style="left:544px;top:568px" width="14" height="14"><path d="M11.3 7.2 A4.4 4.4 0 1 1 7.6 2.9" stroke="#1e88e5" stroke-width="1.8" fill="none"/><path d="M6.6 0.4 L10.4 3 L6.6 5.6 Z" fill="#1e88e5"/></svg><div class="a nw" style="left:1803px;top:566px;line-height:16px;color:#333">显示1到10,共88记录</div>
</body></html>
